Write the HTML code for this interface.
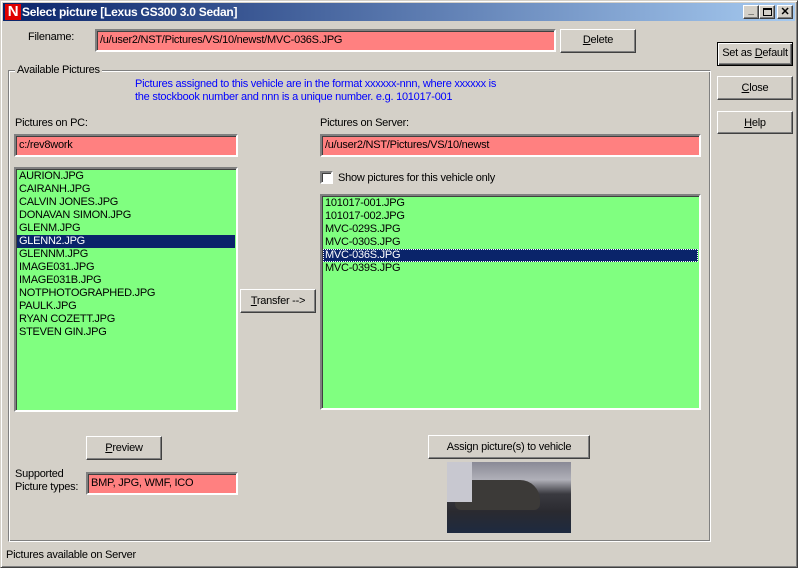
<!DOCTYPE html>
<html><head><style>
*{margin:0;padding:0;box-sizing:border-box}
body{width:798px;height:568px;background:#d4d0c8;font:11px "Liberation Sans",sans-serif;letter-spacing:-0.25px;color:#000;position:relative;overflow:hidden}
.a{position:absolute;white-space:nowrap}
.fld{position:absolute;background:#ff8080;border:2px solid;border-color:#808080 #fff #fff #808080;box-shadow:inset 1px 1px 0 #404040;padding:3px 0 0 3px;white-space:nowrap}
.lst{position:absolute;background:#80ff80;border:2px solid;border-color:#808080 #fff #fff #808080;box-shadow:inset 1px 1px 0 #404040;padding:1px 1px}
.lst div{height:13px;line-height:13px;padding-left:2px;white-space:nowrap}
.sel{background:#0a246a;color:#fff}
.btn{position:absolute;background:#d4d0c8;border:1px solid;border-color:#fff #404040 #404040 #fff;box-shadow:inset -1px -1px 0 #808080;text-align:center;white-space:nowrap}
u{text-decoration:underline}
</style></head><body>
<div class="a" style="left:0;top:0;width:798px;height:568px;border:1px solid;border-color:#d4d0c8 #404040 #404040 #d4d0c8;box-shadow:inset 1px 1px 0 #fff,inset -1px -1px 0 #808080"></div>
<div class="a" style="left:3px;top:3px;width:792px;height:18px;background:linear-gradient(to right,#0a246a,#a6caf0)"></div>
<div class="a" style="left:5px;top:4px;width:16px;height:16px;background:#e00000;color:#fff;font:bold 15px 'Liberation Sans',sans-serif;text-align:center;line-height:16px">N</div>
<div class="a" style="left:22px;top:5px;color:#fff;font:bold 12px 'Liberation Sans',sans-serif">Select picture [Lexus GS300 3.0 Sedan]</div>
<div class="btn" style="left:743px;top:5px;width:16px;height:14px;font-size:10px;line-height:10px;font-weight:bold">_</div>
<div class="btn" style="left:759px;top:5px;width:16px;height:14px"><div style="position:absolute;left:3px;top:2px;width:9px;height:8px;border:1px solid #000;border-top-width:2px"></div></div>
<div class="btn" style="left:777px;top:5px;width:16px;height:14px;font-weight:bold;line-height:12px">✕</div>

<div class="a" style="left:28px;top:31px">Filename:</div>
<div class="fld" style="left:95px;top:29px;width:461px;height:23px">/u/user2/NST/Pictures/VS/10/newst/MVC-036S.JPG</div>
<div class="btn" style="left:560px;top:29px;width:76px;height:24px;line-height:21px"><u>D</u>elete</div>

<div class="btn" style="left:717px;top:42px;width:76px;height:24px;line-height:20px;border:1px solid #000;box-shadow:inset 1px 1px 0 #fff,inset -1px -1px 0 #404040,inset -2px -2px 0 #808080">Set as <u>D</u>efault</div>
<div class="btn" style="left:717px;top:76px;width:76px;height:24px;line-height:22px"><u>C</u>lose</div>
<div class="btn" style="left:717px;top:111px;width:76px;height:23px;line-height:22px"><u>H</u>elp</div>

<div class="a" style="left:8px;top:70px;width:703px;height:472px;border:1px solid;border-color:#808080 #fff #fff #808080;box-shadow:inset 1px 1px 0 #fff,inset -1px -1px 0 #808080"></div>
<div class="a" style="left:15px;top:64px;background:#d4d0c8;padding:0 2px">Available Pictures</div>
<div class="a" style="left:135px;top:78px;color:#0000ff;line-height:13px">Pictures assigned to this vehicle are in the format xxxxxx-nnn, where xxxxxx is<br>the stockbook number and nnn is a unique number. e.g. 101017-001</div>

<div class="a" style="left:15px;top:117px">Pictures on PC:</div>
<div class="fld" style="left:14px;top:134px;width:224px;height:23px">c:/rev8work</div>
<div class="lst" style="left:14px;top:167px;width:224px;height:245px">
<div>AURION.JPG</div><div>CAIRANH.JPG</div><div>CALVIN JONES.JPG</div><div>DONAVAN SIMON.JPG</div><div>GLENM.JPG</div><div class="sel">GLENN2.JPG</div><div>GLENNM.JPG</div><div>IMAGE031.JPG</div><div>IMAGE031B.JPG</div><div>NOTPHOTOGRAPHED.JPG</div><div>PAULK.JPG</div><div>RYAN COZETT.JPG</div><div>STEVEN GIN.JPG</div>
</div>
<div class="btn" style="left:240px;top:289px;width:76px;height:24px;line-height:22px"><u>T</u>ransfer --&gt;</div>

<div class="a" style="left:320px;top:117px">Pictures on Server:</div>
<div class="fld" style="left:320px;top:134px;width:381px;height:23px">/u/user2/NST/Pictures/VS/10/newst</div>
<div class="a" style="left:320px;top:171px;width:13px;height:13px;background:#fff;border:2px solid;border-color:#808080 #fff #fff #808080;box-shadow:inset 1px 1px 0 #404040"></div>
<div class="a" style="left:338px;top:172px">Show pictures for this vehicle only</div>
<div class="lst" style="left:320px;top:194px;width:381px;height:216px">
<div>101017-001.JPG</div><div>101017-002.JPG</div><div>MVC-029S.JPG</div><div>MVC-030S.JPG</div><div class="sel" style="outline:1px dotted #fff;outline-offset:-1px">MVC-036S.JPG</div><div>MVC-039S.JPG</div>
</div>

<div class="btn" style="left:86px;top:436px;width:76px;height:24px;line-height:22px"><u>P</u>review</div>
<div class="a" style="left:15px;top:468px;line-height:13px">Supported<br>Picture types:</div>
<div class="fld" style="left:86px;top:472px;width:152px;height:23px">BMP, JPG, WMF, ICO</div>
<div class="btn" style="left:428px;top:435px;width:162px;height:24px;line-height:22px">Assign picture(s) to vehicle</div>
<div class="a" style="left:447px;top:462px;width:124px;height:71px;background:linear-gradient(to bottom,#8a8a96 0%,#b0b0b8 25%,#3a3a40 45%,#2a2a30 70%,#1e2a40 100%)">
<div class="a" style="left:8px;top:18px;width:85px;height:30px;background:#3c3a38;border-radius:14px 20px 6px 6px"></div>
<div class="a" style="left:0;top:0;width:25px;height:40px;background:#c8c8d0"></div>
</div>

<div class="a" style="left:6px;top:549px">Pictures available on Server</div>
</body></html>
